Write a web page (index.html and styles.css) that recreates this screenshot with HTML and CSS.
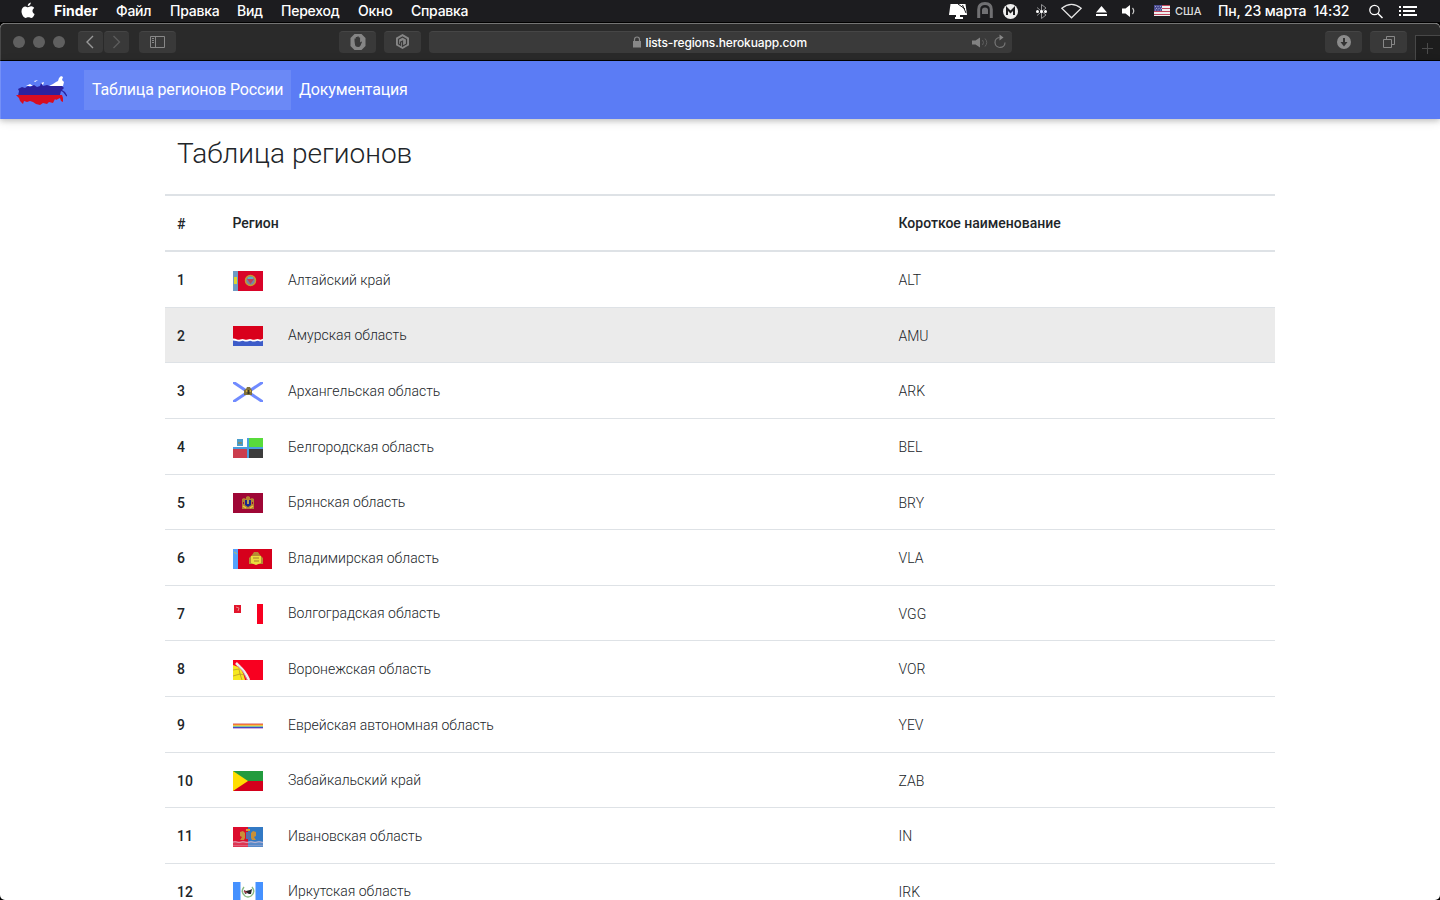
FILE: index.html
```html
<!DOCTYPE html>
<html lang="ru">
<head>
<meta charset="utf-8">
<title>Таблица регионов</title>
<link rel="stylesheet" href="styles.css">
</head>
<body>
<header class="menubar">
  <svg class="apple" width="14" height="17" viewBox="0 0 14 17"><path fill="#fff" d="M9.8 0.6C9.9 2.5 8.6 4 6.8 4.1 6.6 2.4 8 .8 9.800.6ZM7 5.200C7.800 5.200 8.700 4.300 10.200 4.300 11.400 4.300 12.600 5 13.200 6 10.700 7.500 11.100 10.900 13.600 11.900 13 13.700 11.700 15.900 10.200 15.900 9.200 15.900 8.600 15.300 7.400 15.300 6.200 15.300 5.600 15.900 4.700 15.900 2.700 15.900.500 12.300.500 9.200.500 6.100 2.400 4.400 4.400 4.400 5.500 4.400 6.300 5.200 7 5.200Z"/></svg>
  <nav class="menus">
    <b class="m-finder">Finder</b><span class="m-file">Файл</span><span class="m-edit">Правка</span><span class="m-view">Вид</span><span class="m-go">Переход</span><span class="m-window">Окно</span><span class="m-help">Справка</span>
  </nav>
  <div class="status">
    <svg width="261" height="22" viewBox="945 0 261 22">
      <path fill="#fff" d="M950.500 4H965.500L967 15H949Z"/><path fill="#fff" d="M956 15h4v2h3v2h-8v-2h1z"/><path d="M958 4 965 9M962.500 5 966 13" stroke="#1c1c1e" fill="none"/>
      <path d="M978.700 18V9.500Q978.700 3.500 985 3.500T991.300 9.500V18" fill="none" stroke="#707073" stroke-width="3"/><path d="M982 14V10Q982 7.500 985 7.500T988 10V14Z" fill="#707073"/>
      <circle cx="1010.500" cy="11.500" r="7.500" fill="#eee"/><path d="M1007 15V8.500L1010.500 12 1014 8.500V15" fill="none" stroke="#1c1c1e" stroke-width="2"/>
      <path d="M1037 7.500 1046 15 1041.500 18.500V4.500L1046 8 1037 15.500" fill="none" stroke="#929294"/><g fill="#fff"><circle cx="1037.500" cy="11.500" r="1.500"/><circle cx="1041.500" cy="11.500" r="1.500"/><circle cx="1045.500" cy="11.500" r="1.500"/></g>
      <path d="M1061.800 8.200Q1071.500 .7 1081.200 8.200L1071.500 17.800Z" fill="none" stroke="#e5e5e5" stroke-width="1.200"/>
      <path d="M1101.500 6 1107 12.500H1096ZM1096 14h11v2h-11Z" fill="#fff"/>
      <path d="M1122 8.500h3.500L1130 5V17L1125.500 13.500H1122Z" fill="#fff"/><path d="M1132.500 8Q1135 11 1132.500 14" fill="none" stroke="#ccc" stroke-width="1.200"/>
      <path fill="#eee" d="M1154 5h16v11h-16z"/><path d="M1154 5.500h16M1154 8.500h16M1154 11.500h16M1154 14.500h16" stroke="#c0455b" stroke-width="1"/><path fill="#4a4c91" d="M1154 5h8v6h-8z"/><path d="M1155 6.500h7M1156 8.500h6M1155 10h7" stroke="#bbb9da" stroke-width=".8" stroke-dasharray="1 1.500"/>
    </svg>
    <span class="lang">США</span>
    <span class="clock">Пн, 23 марта&nbsp; 14:32</span>
    <svg class="right-icons" width="52" height="22" viewBox="1368 0 52 22"><circle cx="1374.500" cy="10" r="4.700" fill="none" stroke="#fff" stroke-width="1.300"/><path d="M1378 13.500 1382.500 18" stroke="#fff" stroke-width="1.500"/><path d="M1399 7h2M1403 7h14M1399 11h2M1403 11h12M1399 15h2M1403 15h14" stroke="#fff" stroke-width="2"/></svg>
  </div>
</header>
<div class="window">
  <div class="toolbar">
    <div class="lights"><i></i><i></i><i></i></div>
    <div class="tool back"><svg width="24" height="22"><path d="M15 5 9 11l6 6" fill="none" stroke="#999" stroke-width="1.400"/></svg></div>
    <div class="tool forward"><svg width="24" height="22"><path d="M9.500 5l6 6-6 6" fill="none" stroke="#5c5c5c" stroke-width="1.400"/></svg></div>
    <div class="tool side"><svg width="36" height="22"><path d="M11.500 5.500h14v11h-14zM16.500 5.500v11" fill="none" stroke="#888"/><path d="M13 7.500h2M13 9.500h2M13 11.500h2" stroke="#888"/></svg></div>
    <div class="tool hand"><svg width="36" height="22"><path d="M15.500 3h7l4 4v8l-4 4h-7l-4-4V7Z" fill="#858585"/><path d="M15.500 10V7.500h1.300V6h1.500v-.5h1.500v1h1.300v5l1.200-1 .7.600-1.500 3.400q-.8 1.500-2.300 1.500-3.300 0-3.300-3Z" fill="#393939"/></svg></div>
    <div class="tool hex"><svg width="36" height="22"><path d="m18.500 3 6.500 3.700v7.600L18.500 18 12 14.300V6.700Z" fill="#858585"/><path d="m18.500 6 4 2.300v4.600l-4 2.300v-5l-2 1v3l-2-1.300V8.300Z" fill="none" stroke="#393939" stroke-width="1.200"/></svg></div>
    <div class="address">
      <svg class="lock" width="10" height="12"><path d="M1 5h8v6.500H1Z" fill="#888"/><path d="M2.500 6V3.500Q2.500 1 5 1t2.500 2.500V6" fill="none" stroke="#888" stroke-width="1.200"/></svg>
      <span class="url">lists-regions.herokuapp.com</span>
      <svg class="addr-icons" width="36" height="20"><path d="M1 7.500h3.500L9 4.500v10L4.500 11.500H1Z" fill="#828282"/><path d="M11.500 7q2 2.500 0 5M14 5.500q3.500 4 0 8" fill="none" stroke="#606060"/><path d="M28.500 4.500a5 5 0 1 0 5.500 5" fill="none" stroke="#777" stroke-width="1.200"/><path d="m28.500 1.500 4 3-4 3Z" fill="#888"/></svg>
    </div>
    <div class="tool down"><svg width="36" height="22"><circle cx="19" cy="11" r="7" fill="#8b8b8b"/><path d="M19 7v6" stroke="#333" stroke-width="2"/><path d="M15.500 11h7L19 15.500Z" fill="#333"/></svg></div>
    <div class="tool tabs"><svg width="36" height="22"><path d="M13.500 8.500h8v8h-8zM16.500 8V5.500h8v8H22" fill="none" stroke="#888"/></svg></div>
    <div class="plus"><svg width="24" height="25"><path d="M6 12.500h11M11.500 7v11" stroke="#4b4b4b"/></svg></div>
  </div>
  <nav class="navbar">
    <svg class="logo" width="54" height="32" viewBox="0 0 54 32">
      <path fill="#fff" d="M36 12 40 10 43 8 45 7 46 4 48 2 50 3 49 6 51 8 50 12ZM21 7l4-1-3 2Zm-8 5 4-2 3 2ZM28 9l3-1-1 3Z"/>
      <path fill="#2b229d" d="m5 22 1-5-1-2 4-2 3 1 3-2 2 1 4-2 3 2 3-1 1-3 2 3 4-1 3 1h12l2 2-2 2 3 2 3 5-2-1-3-4-2-1-1 4Z"/>
      <path fill="#d80d20" d="M3 21h46l1 3v4l-2-1-1-3-4 2-1-1-2 4-4-1-2 2-4-1-3 2-4-1-3-2-3-1-3 1-3-1-1 3-3-3-1-3Z"/>
    </svg>
    <a class="nav-link active">Таблица регионов России</a>
    <a class="nav-link docs">Документация</a>
  </nav>
  <main class="container">
    <h3>Таблица регионов</h3>
    <div class="table">
      <div class="row head"><b>#</b><span>Регион</span><span></span><span>Короткое наименование</span></div>
      <div class="row first"><b>1</b><svg class="flag" width="30" height="20"><path fill="#d90429" d="M0 0h30v20H0z"/><path fill="#6e9bc4" d="M0 0h5v20H0z"/><path fill="#dcd52f" d="M1 6h3v7H1z"/><circle cx="17.500" cy="9.500" r="5" fill="#7188aa" stroke="#c79a30" stroke-width="1.500"/><path d="M14 8h7l-3.500 5Z" fill="#bf405c"/><path d="M15 7h5" stroke="#59b1c9" stroke-width="2"/></svg><span>Алтайский край</span><span class="code">ALT</span></div>
      <div class="row hover"><b>2</b><svg class="flag" width="30" height="20"><path fill="#d9001b" d="M0 0h30v14H0z"/><path fill="#3d5cc9" d="M0 14h30v6H0z"/><path d="M0 13.500q2 0 3.700.8t3.800 0 3.700 0 3.800 0 3.700 0 3.800 0 3.700 0 3.800-.8" fill="none" stroke="#fff" stroke-width="1.800"/></svg><span>Амурская область</span><span class="code">AMU</span></div>
      <div class="row"><b>3</b><svg class="flag" width="30" height="20"><path d="m0 0 30 20M30 0 0 20" stroke="#708bff" stroke-width="3"/><path d="M11 13V8l2-1 1-2h3l1 2 1 1v5Z" fill="#80713c"/><path d="M13 9h5" stroke="#d1ab36" stroke-width="2"/><path d="M15.500 8v4" stroke="#34372e" stroke-width="2"/></svg><span>Архангельская область</span><span class="code">ARK</span></div>
      <div class="row"><b>4</b><svg class="flag" width="30" height="20"><path fill="#fff" d="M0 0h15v10H0z"/><path fill="#58db3b" d="M16 0h14v9H16z"/><path fill="#cb3d4d" d="M0 11h14v9H0z"/><path fill="#3c3c3c" d="M16 11h14v9H16z"/><path d="M15 0v20M0 10h30" stroke="#4a9edf" stroke-width="2"/><path fill="#4b9dcc" d="M4 1h6v7H4z"/><path d="M5 5h4" stroke="#7b8e78" stroke-width="2"/></svg><span>Белгородская область</span><span class="code">BEL</span></div>
      <div class="row"><b>5</b><svg class="flag" width="30" height="20"><path fill="#9f0736" d="M0 0h30v20H0z"/><path d="M9 16V6l2-1 2 1V4l2-1 2 1v2l2-1 2 1v10Z" fill="#b38432"/><path d="M12 7h6v5l-3 2-3-2Z" fill="#18258d"/><path d="M15 7v4M10 13l3 2M20 13l-3 2" stroke="#edcc3c" stroke-width="1.500"/><path d="M10.500 9v2M19.500 9v2" stroke="#9f0736"/></svg><span>Брянская область</span><span class="code">BRY</span></div>
      <div class="row"><b>6</b><svg class="flag" width="39" height="20"><path fill="#d6001c" d="M0 0h39v20H0z"/><path fill="#55a2fb" d="M0 0h5v20H0z"/><path d="m1 3 3 2" stroke="#b4c465"/><path d="M16 15V9l3-3 2-3h4l2 3 3 3v6Z" fill="#b78b32"/><path d="M18 7h10v7l-5 2-5-2Z" fill="#eadd3d"/><path d="M20 9h6M21 12h5" stroke="#a87930"/></svg><span>Владимирская область</span><span class="code">VLA</span></div>
      <div class="row"><b>7</b><svg class="flag" width="30" height="20"><path fill="#fff" d="M0 0h30v20H0z"/><path fill="#f80020" d="M24 0h6v20h-6z"/><path fill="#e3142c" d="M1 1h7v8H1z"/><path d="m3 3 3 1-1 3" stroke="#e78c88" fill="none"/></svg><span>Волгоградская область</span><span class="code">VGG</span></div>
      <div class="row"><b>8</b><svg class="flag" width="30" height="20"><path fill="#f80020" d="M0 0h30v20H0z"/><path fill="#f6e820" d="M0 5Q10 7 12 20H0Z"/><path d="m0 10 6-1 1 5 4 1M0 16l7-2 2 6" fill="none" stroke="#b38b2c" stroke-width=".7"/><path d="m3 3 4 4q5 4 9 13" fill="none" stroke="#eee" stroke-width="2.500"/><path d="m5 6 5 5 4 9" fill="none" stroke="#bbb" stroke-width=".7"/></svg><span>Воронежская область</span><span class="code">VOR</span></div>
      <div class="row"><b>9</b><svg class="flag" width="30" height="20"><path d="M0 7.500h30" stroke="#e9adb0"/><path d="M0 8.500h30" stroke="#f47735"/><path d="M0 9.500h30" stroke="#eec249"/><path d="M0 10.500h30" stroke="#82c3a0"/><path d="M0 11.500h30" stroke="#4148c3"/><path d="M0 12.500h30" stroke="#cfafe1"/></svg><span>Еврейская автономная область</span><span class="code">YEV</span></div>
      <div class="row"><b>10</b><svg class="flag" width="30" height="20"><path fill="#229b3e" d="M0 0h30v10H0z"/><path fill="#d4001c" d="M0 10h30v10H0z"/><path fill="#ffde00" d="m0 0 15 10L0 20Z"/></svg><span>Забайкальский край</span><span class="code">ZAB</span></div>
      <div class="row"><b>11</b><svg class="flag" width="30" height="20"><path fill="#dc0c2d" d="M0 0h15v20H0z"/><path fill="#3279c4" d="M15 0h15v20H15z"/><path d="M0 15.500h30M0 18.500h30" stroke="#dfc3d6" stroke-opacity=".45" stroke-width="2"/><path d="M0 15q2-1.500 4 0t4 0 4 0 4 0 4 0 4 0 4 0 4 0" stroke="#dfc3d6" stroke-opacity=".6" fill="none"/><path d="m7 5 3-1 2 2v5l-1 2H7l2-3-2-1Zm16 0-3-1-2 2v5l1 2h4l-2-3 2-1Z" fill="#c99038"/><path fill="#5870aa" d="M13 5h4v7h-4z"/><path d="M13 3h4" stroke="#d6a138" stroke-width="2"/></svg><span>Ивановская область</span><span class="code">IN</span></div>
      <div class="row"><b>12</b><svg class="flag" width="30" height="20"><path fill="#fff" d="M0 0h30v20H0z"/><path fill="#4591ff" d="M0 0h7.500v20H0zM22.500 0H30v20h-7.500z"/><path d="M11 5q-4 5 1 9 3 2 6 0 5-4 1-9" fill="none" stroke="#89b982" stroke-width="1.400"/><path d="m11 8 2 1 4-1 2-1-1 5h-2l-2-1-2 1Z" fill="#252424"/><path d="m11 9 3 2" stroke="#b34350" stroke-width="1.500"/></svg><span>Иркутская область</span><span class="code">IRK</span></div>
    </div>
  </main>
</div>
<i class="corner left"></i><i class="corner right"></i>
</body>
</html>
```
FILE: styles.css
```css
* { box-sizing: border-box; }
body { margin: 0; width: 1440px; height: 900px; overflow: hidden; background: #000; font-family: Roboto, sans-serif; color: #212529; position: relative; }
svg { display: block; flex: none; }
.menubar { height: 23px; background: #1c1c1f; border-bottom: 1px solid #000; display: flex; color: #fff; font: 500 14px/22px Inter, sans-serif; white-space: nowrap; }
.apple { margin: 2px 0 0 20.500px; }
.menus { display: flex; gap: 18px; margin-left: 19.500px; letter-spacing: -.25px; }
.menus > * { flex: none; }
.menus b { font-weight: 700; letter-spacing: 0; }
.m-finder { width: 44px; }
.m-file { width: 36px; }
.m-edit { width: 49px; }
.m-view { width: 26px; }
.m-go { width: 59px; }
.m-window { width: 35px; }
.m-help { width: 57px; }
.status { display: flex; margin-left: 477px; }
.lang { width: 43px; margin-left: -31px; font-size: 11px; font-weight: 500; color: #ddd; }
.clock { width: 132px; letter-spacing: -.15px; }
.right-icons { margin-left: 18px; }
.window { height: 877px; background: #fff; border-radius: 5px; overflow: hidden; }
.toolbar { height: 38px; background: #2a2a2a; border-top: 1px solid #747474; border-bottom: 1px solid #000; border-left: 1px solid #484848; border-radius: 5px 5px 0 0; display: flex; padding: 7px 0 0 12px; }
.lights { display: flex; gap: 8px; margin: 5px 13px 0 0; }
.lights i { width: 12px; height: 12px; border-radius: 50%; background: #606060; }
.tool { width: 37px; height: 22px; flex: none; border-radius: 4px; background: #393939; border-top: 1px solid #454545; }
.tool svg { margin-top: -1px; }
.back, .forward { width: 25px; }
.forward { margin-left: 1px; }
.side { margin-left: 10px; }
.hand { margin-left: 163px; }
.hex { margin-left: 8px; }
.address { width: 583px; height: 22px; margin-left: 8px; flex: none; border-radius: 4px; background: #3a3a3a; border-top: 1px solid #464646; display: flex; align-items: center; padding-left: 203px; color: #fff; font: 500 12px/20px Inter, sans-serif; }
.lock { margin-top: -2px; }
.url { width: 165px; margin-left: 3.500px; white-space: nowrap; letter-spacing: -.13px; }
.addr-icons { margin-left: 160.500px; }
.down { margin-left: 313px; }
.tabs { margin-left: 8px; }
.plus { width: 25px; height: 25px; margin: 4px 0 0 8px; background: #1d1d1d; border-left: 1px solid #484848; border-top: 1px solid #484848; }
.navbar { height: 58px; background: #5b7cf5; border-left: 1px solid #7590f7; box-shadow: 0 2px 5px rgba(0,0,0,.16), 0 2px 10px rgba(0,0,0,.12); display: flex; align-items: center; padding-left: 12px; position: relative; }
.nav-link { height: 40px; padding: 8px; color: #fff; font-size: 16px; line-height: 24px; font-weight: 400; white-space: nowrap; letter-spacing: -.17px; }
.logo { margin-right: 17px; }
.active { width: 207px; background: rgba(255,255,255,.1); }
.container { width: 1110px; margin: 0 auto; }
h3 { margin: 0; height: 75px; padding: 18px 12px 0; font-size: 28px; line-height: 34px; font-weight: 300; }
.row { display: grid; grid-template-columns: 55.5px 55.5px 610.5px 1fr; height: 55.6px; padding-left: 12px; border-top: 1px solid #dee2e6; font-size: 14px; line-height: 21.6px; font-weight: 300; }
.row > span { padding-top: 17.650px; }
.row > b, .row > .code { padding-top: 18.100px; }
.row > b { font-weight: 500; }
.row.head { height: 58px; border-top: 2px solid #dee2e6; border-bottom: 2px solid #dee2e6; font-weight: 500; }
.row.head > span { padding-top: 17px; }
.row.head > b { padding-top: 18px; }
.row.first { height: 54.8px; border-top: 0; }
.row.hover { background: #ebebeb; }
.flag { margin: 18.600px 0 0 .5px; }
.corner { position: absolute; bottom: 0; width: 4px; height: 4px; }
.corner.left { left: 0; background: radial-gradient(circle at 4px 0, transparent 4px, #000 4.500px); }
.corner.right { right: 0; background: radial-gradient(circle at 0 0, transparent 4px, #000 4.500px); }
```
